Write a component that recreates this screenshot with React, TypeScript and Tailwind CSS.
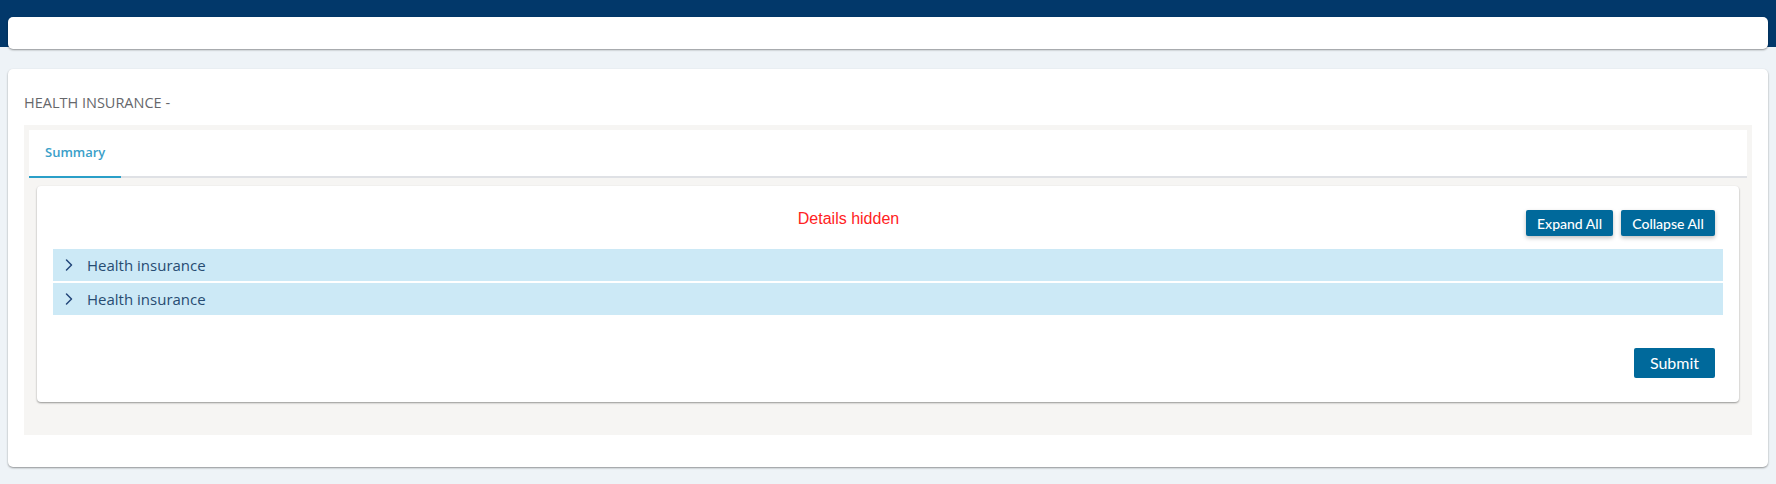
import { ChevronRight } from "lucide-react";

const rows = ["Health insurance", "Health insurance"];

export default function App() {
  return (
    <div className="min-h-[484px] bg-[#eef3f7] font-['Open_Sans',sans-serif]">
      {/* top band with floating header card */}
      <div className="h-[47px] bg-[#02386a] px-2 pt-[17px]">
        <div className="h-[32px] rounded-[5px] bg-white shadow-[0_1px_2px_rgba(0,0,0,0.4)]" />
      </div>

      <div className="mx-2 mt-[22px] h-[398px] rounded-[5px] bg-white px-4 pt-[24px] shadow-[0_1px_2px_rgba(0,0,0,0.4)]">
        <h1 className="text-[14.5px] leading-[20px] text-[#66676b]">HEALTH INSURANCE -</h1>

        <div className="mt-[12px] bg-[#f6f5f3] px-[5px] pt-[5px] pb-[33px]">
          {/* tabs */}
          <div className="flex h-[48px] border-b-2 border-[#dfe1e5] bg-white">
            <button className="-mb-[2px] flex items-center border-b-2 border-[#2a9fc8] px-4 text-[13px] font-semibold text-[#3aa0c9]">
              Summary
            </button>
          </div>

          <div className="mx-2 mt-2 rounded-[4px] bg-white px-4 pt-[24px] pb-[24px] shadow-[0_1px_2px_rgba(0,0,0,0.4)]">
            <div className="flex items-start">
              <div className="flex-1 pl-[118px] text-center font-['Liberation_Sans',sans-serif] text-[16px] leading-[18px] text-[#ff2222]">
                Details hidden
              </div>
              <div className="mr-2 flex gap-2 font-['Lato',sans-serif]">
                <button className="h-[26px] w-[87px] rounded-[2px] bg-[#00699b] text-[14px] font-medium text-white shadow-[0_2px_4px_rgba(0,0,0,0.25)]">
                  Expand All
                </button>
                <button className="h-[26px] w-[94px] rounded-[2px] bg-[#00699b] text-[14px] font-medium text-white shadow-[0_2px_4px_rgba(0,0,0,0.25)]">
                  Collapse All
                </button>
              </div>
            </div>

            <div className="mt-[13px] flex flex-col gap-[2px]">
              {rows.map((label, i) => (
                <div key={i} className="flex h-[32px] items-center bg-[#cce9f6] pl-[6px] text-[15px] text-[#274c72]">
                  <ChevronRight className="h-[20px] w-[20px] text-[#23477a]" strokeWidth={1.8} />
                  <span className="ml-[8px]">{label}</span>
                </div>
              ))}
            </div>

            <div className="mt-[33px] flex justify-end pr-2">
              <button className="h-[30px] w-[81px] rounded-[2px] bg-[#00699b] font-['Lato',sans-serif] text-[16px] text-white">
                Submit
              </button>
            </div>
          </div>
        </div>
      </div>
    </div>
  );
}
